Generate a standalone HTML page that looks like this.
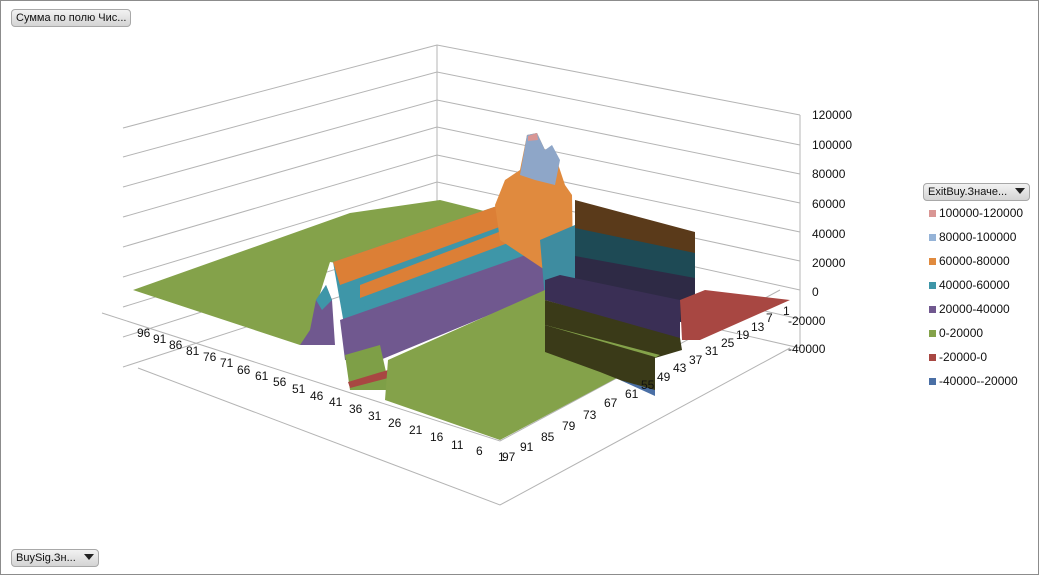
<!DOCTYPE html>
<html><head><meta charset="utf-8"><style>
html,body{margin:0;padding:0;background:#fff}
.w{position:relative;width:1037px;height:573px;border:1px solid #8c8c8c;overflow:hidden;font-family:"Liberation Sans","DejaVu Sans",sans-serif}
.btn{position:absolute;height:16px;border:1px solid #a8a8a8;border-radius:4px;background:linear-gradient(#f2f2f2,#d4d4d4);font-size:11px;line-height:16px;padding:0 4px;color:#111;white-space:nowrap}
.tri{display:inline-block;width:0;height:0;border-left:5px solid transparent;border-right:5px solid transparent;border-top:6px solid #222;margin-left:8px;vertical-align:1px}
.lg{position:absolute;left:928px;font-size:12px;color:#111}
.lg i{display:inline-block;width:7px;height:7px;margin-right:3px;vertical-align:0}
svg text{font-family:"Liberation Sans",sans-serif;font-size:12px;fill:#111}
</style></head><body><div class="w">
<div class="btn" style="left:10px;top:8px">Сумма по полю Чис...</div>
<div class="btn" style="left:10px;top:548px">BuySig.Зн...<span class="tri"></span></div>
<div class="btn" style="left:922px;top:182px">ExitBuy.Значе...<span class="tri"></span></div>
<div class="lg" style="top:205px"><i style="background:#d99694"></i>100000-120000</div>
<div class="lg" style="top:229px"><i style="background:#95b3d7"></i>80000-100000</div>
<div class="lg" style="top:253px"><i style="background:#e08a3e"></i>60000-80000</div>
<div class="lg" style="top:277px"><i style="background:#3e96a8"></i>40000-60000</div>
<div class="lg" style="top:301px"><i style="background:#70588f"></i>20000-40000</div>
<div class="lg" style="top:325px"><i style="background:#84a24a"></i>0-20000</div>
<div class="lg" style="top:349px"><i style="background:#a84742"></i>-20000-0</div>
<div class="lg" style="top:373px"><i style="background:#4a6fa5"></i>-40000--20000</div>
<svg width="1039" height="575" style="position:absolute;left:-1px;top:-1px">
<g stroke="#b4b4b4" fill="none" stroke-width="1">
<path d="M123,128L437,45L800,115M123,157L437,72L800,145M123,187L437,100L800,174M123,217L437,127L800,203M123,247L437,155L800,232M123,277L437,182L800,261M123,307L437,210L800,290M123,337L437,237L800,319M123,367L437,265L800,348"/>
<path d="M437,45V265M800,115V348M138,368L500,505L790,348"/>
<path d="M102,313L500,441L780,290"/>
</g>
<polygon points="133,290 350,213 440,200 500,215 380,270 330,262 318,300 310,335 300,345" fill="#84a24a"/>
<polygon points="300,345 310,330 316,300 326,285 332,300 335,345" fill="#70588f"/>
<polygon points="316,300 326,285 332,300 322,310" fill="#3e96a8"/>
<polygon points="333,262 500,205 520,210 525,300 345,330" fill="#3e96a8"/>
<polygon points="333,262 500,205 505,225 340,285" fill="#dc7f36"/>
<polygon points="360,285 525,225 545,230 545,285 370,330" fill="#3e96a8"/>
<polygon points="360,285 525,222 527,236 360,298" fill="#dc7f36"/>
<polygon points="340,320 540,250 550,290 380,360 345,360" fill="#70588f"/>
<polygon points="345,355 380,345 390,390 350,390" fill="#7e9f47"/>
<polygon points="348,382 388,370 388,378 350,388" fill="#a84742"/>
<polygon points="495,205 505,180 520,170 527,135 537,133 545,150 555,155 565,185 572,195 573,260 545,270 500,240" fill="#e08a3e"/>
<polygon points="520,175 527,135 537,133 545,150 552,145 560,160 555,185 535,180" fill="#8ea6c8"/>
<polygon points="528,136 537,133 538,140 528,141" fill="#d99694"/>
<polygon points="540,240 575,225 580,290 545,300" fill="#3e8ca0"/>
<polygon points="575,200 695,232 695,255 575,230" fill="#5a3a1a"/>
<polygon points="575,228 695,253 695,280 575,258" fill="#1e4a55"/>
<polygon points="575,256 695,278 695,325 575,300" fill="#2e2a45"/>
<polygon points="545,280 560,275 680,300 680,340 545,300" fill="#3a2f55"/>
<polygon points="545,300 680,338 682,350 655,358 545,325" fill="#3a3a18"/>
<polygon points="680,300 705,290 790,300 700,340 682,340" fill="#a84742"/>
<polygon points="385,400 500,440 660,355 545,325 545,290 388,360" fill="#84a24a"/>
<polygon points="545,325 655,357 655,395 620,380 600,372 545,352" fill="#3a3a18"/>
<polygon points="620,380 655,390 655,396" fill="#4a6fa5"/>
<g>
<text x="812" y="119">120000</text><text x="812" y="149">100000</text><text x="812" y="178">80000</text>
<text x="812" y="208">60000</text><text x="812" y="238">40000</text><text x="812" y="267">20000</text>
<text x="812" y="296">0</text><text x="788" y="325">-20000</text><text x="788" y="353">-40000</text>
<text x="783" y="315">1</text><text x="766" y="322">7</text><text x="751" y="331">13</text><text x="736" y="339">19</text>
<text x="721" y="347">25</text><text x="705" y="355">31</text><text x="689" y="364">37</text><text x="673" y="372">43</text>
<text x="657" y="381">49</text><text x="641" y="389">55</text><text x="625" y="398">61</text><text x="604" y="407">67</text>
<text x="583" y="419">73</text><text x="562" y="430">79</text><text x="541" y="441">85</text><text x="520" y="451">91</text><text x="502" y="461">97</text>
<text x="137" y="337">96</text><text x="153" y="343">91</text><text x="169" y="349">86</text><text x="186" y="355">81</text>
<text x="203" y="361">76</text><text x="220" y="367">71</text><text x="237" y="374">66</text><text x="255" y="380">61</text>
<text x="273" y="386">56</text><text x="292" y="393">51</text><text x="310" y="400">46</text><text x="329" y="406">41</text>
<text x="349" y="413">36</text><text x="368" y="420">31</text><text x="388" y="427">26</text><text x="409" y="434">21</text>
<text x="430" y="441">16</text><text x="451" y="449">11</text><text x="476" y="455">6</text><text x="498" y="461">1</text>
</g>
</svg>
</div></body></html>
